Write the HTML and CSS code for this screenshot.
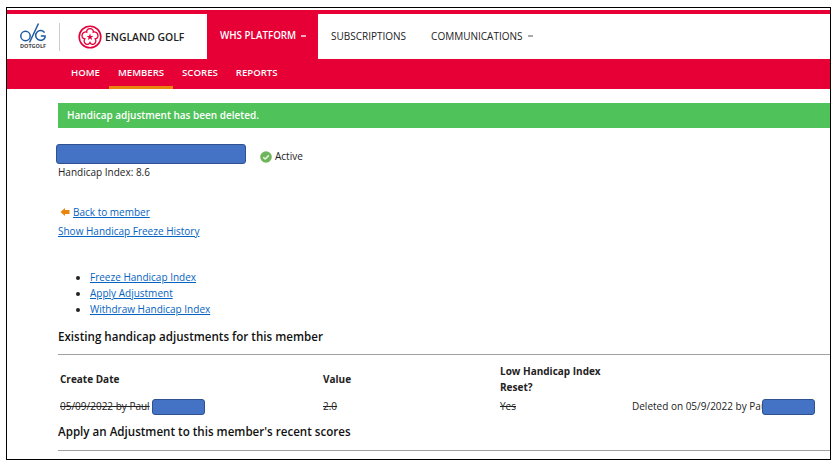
FILE: index.html
```html
<!DOCTYPE html>
<html lang="en">
<head>
<meta charset="utf-8">
<title>Handicap adjustments</title>
<link rel="stylesheet" href="styles.css">
</head>
<body>
<div class="frame">
  <div class="topline"></div>
  <header class="header">
    <div class="brand">
      <div class="dotgolf">
        <svg class="dotgolf-mark" viewBox="0 0 26 20" width="26" height="20" aria-hidden="true">
          <circle cx="5.5" cy="13" r="4.7" fill="none" stroke="#1d5aa0" stroke-width="1.5"/>
          <path d="M9.5 19.5 L18.5 0.5" fill="none" stroke="#1d5aa0" stroke-width="1.5"/>
          <path d="M24.6 9.6 A4.9 4.9 0 1 0 25 14.6 L25 13 L20.8 13" fill="none" stroke="#1d5aa0" stroke-width="1.5"/>
        </svg>
        <span class="dotgolf-name">DOTGOLF</span>
      </div>
      <div class="brand-rule"></div>
      <div class="eg">
        <svg class="eg-mark" viewBox="0 0 24 24" width="24" height="24" aria-hidden="true">
          <circle cx="12" cy="12" r="10.8" fill="none" stroke="#e4003a" stroke-width="1.6"/>
          <path d="M12 3.6 C14.6 3.6 15.6 5.6 15.3 7.2 C17 6.5 19.5 7.5 19.9 9.8 C20.3 12 18.8 13.5 17.2 13.8 C18.2 15.2 18.2 17.6 16.2 18.9 C14.2 20 12.6 19 12 17.6 C11.4 19 9.8 20 7.8 18.9 C5.8 17.6 5.8 15.2 6.8 13.8 C5.2 13.5 3.7 12 4.1 9.8 C4.5 7.5 7 6.5 8.7 7.2 C8.4 5.6 9.4 3.6 12 3.6 Z" fill="#fff" stroke="#e4003a" stroke-width="1.3"/>
          <path d="M12 8.6 L12.9 11 L15.4 11 L13.4 12.5 L14.1 15 L12 13.5 L9.9 15 L10.6 12.5 L8.6 11 L11.1 11 Z" fill="#e4003a"/>
        </svg>
        <span class="eg-name">ENGLAND GOLF</span>
      </div>
    </div>
    <nav class="mainnav">
      <a class="mainitem is-active">WHS PLATFORM<span class="caret"></span></a>
      <a class="mainitem">SUBSCRIPTIONS</a>
      <a class="mainitem">COMMUNICATIONS<span class="caret"></span></a>
    </nav>
  </header>
  <nav class="subnav">
    <a class="subitem">HOME</a>
    <a class="subitem is-current">MEMBERS</a>
    <a class="subitem">SCORES</a>
    <a class="subitem">REPORTS</a>
  </nav>
  <main class="content">
    <div class="alert">Handicap adjustment has been deleted.</div>
    <div class="member">
      <div class="redact redact-name"></div>
      <svg class="status-icon" viewBox="0 0 12 12" width="12" height="12" aria-hidden="true">
        <circle cx="6" cy="6" r="5.8" fill="#6eb55a"/>
        <path d="M3.2 6.2 L5.2 8 L8.8 4.4" fill="none" stroke="#e8f5e2" stroke-width="1.5"/>
      </svg>
      <span class="status-text">Active</span>
    </div>
    <p class="index">Handicap Index: 8.6</p>
    <p class="backline">
      <svg class="back-icon" viewBox="0 0 10 10" width="10" height="10" aria-hidden="true">
        <path d="M0.5 5 L5 1 L5 3 L9.5 3 L9.5 7 L5 7 L5 9 Z" fill="#e8850c"/>
      </svg>
      <a class="link" href="#">Back to member</a>
    </p>
    <p class="freeze"><a class="link" href="#">Show Handicap Freeze History</a></p>
    <ul class="actions">
      <li><a class="link" href="#">Freeze Handicap Index</a></li>
      <li><a class="link" href="#">Apply Adjustment</a></li>
      <li><a class="link" href="#">Withdraw Handicap Index</a></li>
    </ul>
    <h2 class="heading heading-existing">Existing handicap adjustments for this member</h2>
    <hr class="rule">
    <div class="grid grid-head">
      <div>Create Date</div>
      <div>Value</div>
      <div class="col-low">Low Handicap Index<br>Reset?</div>
    </div>
    <div class="grid grid-row">
      <div class="struck cell-redact">05/09/2022 by Paul<span class="redact redact-a"></span></div>
      <div class="struck">2.0</div>
      <div class="struck">Yes</div>
      <div class="cell-redact">Deleted on 05/9/2022 by Paul<span class="redact redact-b"></span></div>
    </div>
    <h2 class="heading heading-apply">Apply an Adjustment to this member's recent scores</h2>
    <hr class="rule">
  </main>
</div>
</body>
</html>
```
FILE: styles.css
```css
* { box-sizing: border-box; }
html, body { margin: 0; padding: 0; background: #fff; }
body {
  font-family: "Open Sans", "Noto Sans", sans-serif;
  font-size: 10px;
  color: #222;
  height: 466px;
  overflow: hidden;
}
.frame {
  width: 825px;
  height: 453px;
  margin: 7px 0 0 6px;
  border: 1px solid #000;
  overflow: hidden;
  padding-top: 2px;
}
.topline { height: 4px; background: #e60036; }
.header { display: flex; height: 45px; background: #fff; }
.brand { width: 200px; display: flex; align-items: center; padding-left: 13px; }
.dotgolf { width: 26px; display: flex; flex-direction: column; align-items: center; }
.dotgolf-mark { display: block; }
.dotgolf-name { font-size: 5.5px; font-weight: 700; color: #444; line-height: 7px; margin-top: 0; }
.brand-rule { width: 1px; height: 28px; background: #ccc; margin-left: 13px; }
.eg { display: flex; align-items: center; margin-left: 18px; }
.eg-mark { display: block; }
.eg-name { font-size: 10.4px; font-weight: 600; color: #222; margin-left: 3px; white-space: nowrap; }
.mainnav { display: flex; align-items: stretch; }
.mainitem {
  display: flex;
  align-items: center;
  padding: 0 13px 2px;
  font-size: 10px;
  color: #222;
  white-space: nowrap;
}
.mainitem.is-active { background: #e60036; color: #fff; font-size: 9.8px; font-weight: 600; width: 111px; padding-right: 0; }
.mainitem:nth-child(3) { margin-left: -1px; }
.caret { flex: none; width: 5px; height: 2px; background: #aaa; margin-left: 5px; }
.is-active .caret { background: #f3a8bb; }
.subnav { display: flex; height: 30px; background: #e60036; padding-left: 55px; }
.subitem {
  display: flex;
  align-items: center;
  padding: 0 9px;
  color: #fff;
  font-size: 9.6px;
  font-weight: 600;
  border-bottom: 3px solid transparent;
  padding-bottom: 1px;
}
.subitem.is-current { border-bottom-color: #e8850c; }
.content { padding: 14px 0 0 51px; }
.alert {
  height: 25px;
  background: #4fc25a;
  color: #fff;
  font-weight: 600;
  line-height: 25px;
  padding-left: 9px;
}
.member { display: flex; align-items: flex-start; margin: 16px 0 0 -2px; height: 20px; }
.redact {
  display: block;
  background: #4472c4;
  border: 1px solid #2f528f;
  border-radius: 3px;
}
.redact-name { width: 190px; height: 20px; }
.status-icon { margin: 7px 0 0 14px; }
.status-text { margin: 5px 0 0 3px; color: #222; line-height: 14px; }
.index { margin: 1px 0 0; line-height: 14px; }
.backline { margin: 26px 0 0 2px; line-height: 14px; display: flex; align-items: center; }
.back-icon { margin-right: 3px; }
.link { color: #0563c1; text-decoration: underline; }
.freeze { margin: 5px 0 0; line-height: 14px; }
.actions { margin: 31px 0 0; padding: 0 0 0 32px; line-height: 16px; }
.actions li::marker { font-size: 10px; }
.heading { margin: 0; font-size: 11.6px; font-weight: 600; color: #111; line-height: 14px; }
.heading-existing { margin: 13px 0 0; }
.rule { height: 1px; border: 0; background: #a0a0a0; margin: 0; }
.heading-existing + .rule { margin-top: 10px; }
.grid {
  display: grid;
  grid-template-columns: 263px 177px 132px 1fr;
  padding-left: 2px;
}
.grid-head {
  margin-top: 7px;
  height: 33px;
  align-items: center;
  font-weight: 700;
  color: #222;
  line-height: 16px;
}
.grid-row { margin-top: 1px; height: 20px; align-items: center; line-height: 14px; }
.struck { text-decoration: line-through; }
.cell-redact { position: relative; white-space: nowrap; }
.redact-a, .redact-b { position: absolute; top: 0; height: 16px; width: 53px; }
.redact-a { left: 92px; }
.redact-b { left: 130px; width: 53px; }
.heading-apply { margin: 9px 0 0; }
.heading-apply + .rule { margin-top: 11px; }
```
